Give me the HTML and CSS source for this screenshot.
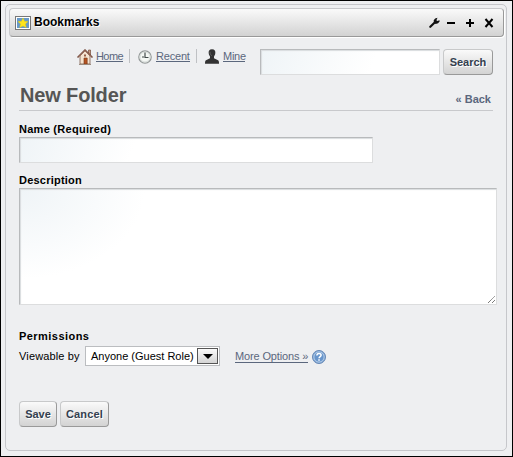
FILE: index.html
```html
<!DOCTYPE html>
<html lang="en">
<head>
<meta charset="utf-8">
<title>Bookmarks</title>
<link rel="stylesheet" href="styles.css">
</head>
<body>
<main class="portlet">
  <header class="topper">
    <svg class="star-icon" width="16" height="14" viewBox="0 0 16 14"><rect x=".5" y=".5" width="15" height="13" fill="#fff" stroke="#777"/><rect x="2" y="2" width="12" height="10" fill="#6799c9"/><path d="M8 2l1.500 3.200 3.500.4-2.600 2.400.9 3.600L8 9.900l-3.300 1.700.9-3.600L3 5.600l3.500-.4z" fill="#ffe51b" stroke="#e6c900" stroke-width=".4"/></svg>
    <span class="topper-title">Bookmarks</span>
    <svg class="controls" width="66" height="12" viewBox="0 0 66 12"><path d="M1.300 9.800L6 5.300" stroke="#111" stroke-width="2.200" stroke-linecap="round"/><path d="M8.500.8L6.200 1.500 4.700 3.300l.2 2.500 1.800 1.100 2.400-.7 1.600-2-.3-.9-2 .8-1-.8z" fill="#111"/><path d="M18 6h8M37 6h8M41 2v8" stroke="#000" stroke-width="2"/><path d="M56.500 2l7 8M63.500 2l-7 8" stroke="#000" stroke-width="2"/></svg>
  </header>
  <div class="toolbar">
    <nav class="nav">
      <svg class="home-icon" width="16" height="16" viewBox="0 0 16 16"><path d="M11.500 1h2v5h-2z" fill="#c99980" stroke="#754d3b" stroke-width=".7"/><path d="M3 7l5-5 5 5v8H3z" fill="#f5e4d1" stroke="#7c5c4c" stroke-width=".8"/><path d="M.5 8.500L8 1l7.500 7.500" fill="none" stroke="#71483a" stroke-width="1.500"/><path d="M1.500 8L8 1.600 14.500 8" fill="none" stroke="#c79884" stroke-width=".7"/><path d="M7 9h3.200v6H7z" fill="#b65321" stroke="#733719" stroke-width=".6"/><path d="M7 5.500h2v2H7z" fill="#966149"/><path d="M2 15.500h12" stroke="#9b8c80"/></svg>
      <a class="link home" href="#">Home</a>
      <span class="divider"></span>
      <svg class="clock-icon" width="14" height="14" viewBox="0 0 14 14"><circle cx="7" cy="7" r="6.200" fill="#f5f8f5" stroke="#929797" stroke-width="1.200"/><circle cx="7" cy="7" r="5" fill="none" stroke="#d7dcda"/><path d="M7 2.500V7.500H10.500M4 7h2" fill="none" stroke="#434b4b" stroke-width="1.200"/></svg>
      <a class="link recent" href="#">Recent</a>
      <span class="divider"></span>
      <svg class="user-icon" width="14" height="15" viewBox="0 0 14 15"><path d="M7 .2c2.700 0 3.700 1.800 3.300 4.100-.2 1.700-1 2.600-1.300 3.300v1.600l4 2c1 .6 1 2.200 1 3.600H0c0-1.400 0-3 1-3.600l4-2V7.600C4.700 6.900 3.900 6 3.700 4.300 3.300 2 4.300.2 7 .2z" fill="#333"/><path d="M5 2.700c0 2 .3 3.300 2 4" fill="none" stroke="#666" stroke-width=".8"/></svg>
      <a class="link mine" href="#">Mine</a>
    </nav>
    <div class="field search-field"></div>
    <div class="button search-button"><span>Search</span></div>
  </div>
  <div class="heading">
    <h1>New Folder</h1>
    <a class="back" href="#">« Back</a>
  </div>
  <section class="form">
    <div class="label name-label"><span>Name (Required)</span></div>
    <div class="field name-field"></div>
    <div class="label description-label"><span>Description</span></div>
    <div class="field description-field"><svg class="grip" width="9" height="9" viewBox="0 0 9 9"><path d="M1 8L8 1M5 8l3-3" stroke="#555" stroke-width="1" stroke-dasharray="1.100 .5"/></svg></div>
    <div class="label permissions-label"><span>Permissions</span></div>
    <div class="permissions">
      <span class="viewable">Viewable by</span>
      <div class="select"><span class="select-text">Anyone (Guest Role)</span><span class="arrow"><svg width="10" height="5" viewBox="0 0 10 5"><path d="M0 0h10L5 5z"/></svg></span></div>
      <a class="link more" href="#">More Options »</a>
      <svg class="help-icon" width="14" height="14" viewBox="0 0 14 14"><circle cx="7" cy="7" r="6.500" fill="#7da3d1" stroke="#6688b6"/><circle cx="7" cy="7" r="5.100" fill="#6795cc" stroke="#b9d0ea" stroke-width=".9"/><path d="M4.900 5.400c0-2.800 4.300-2.500 4.200-.2 0 1.400-2 1.400-2 3M7 9.200v1.600" fill="none" stroke="#fff" stroke-width="1.500"/></svg>
    </div>
    <div class="actions"><div class="button save"><span>Save</span></div><div class="button cancel"><span>Cancel</span></div></div>
  </section>
</main>
</body>
</html>
```

FILE: styles.css
```css
* { box-sizing: border-box; }
body {
  margin: 0;
  height: 457px;
  padding: 3px 4px 5px;
  border: 1px solid #000;
  background: #eeeff1;
  font: 11px/14px "Liberation Sans", Arial, sans-serif;
  color: #000;
  overflow: hidden;
}
svg { display: block; flex: none; }
span, a { white-space: nowrap; }
.portlet {
  width: 502px;
  height: 447px;
  border: 1px solid #c6c7cb;
  border-radius: 5px;
  padding: 3px;
}
.topper {
  width: 495px;
  height: 29px;
  display: flex;
  align-items: flex-start;
  border: 1px solid #c8c9cc;
  border-right-color: #999;
  border-bottom-color: #999;
  border-radius: 4px;
  background: linear-gradient(#fafafa, #d2d2d2);
  box-shadow: 1px 1px #fff;
}
.star-icon { margin: 7px 0 0 5px; }
.topper-title { margin: 6px 0 0 3px; font-size: 12px; font-weight: bold; text-shadow: 1px 1px #fff; }
.controls { margin: 8px 8px 0 auto; }
.toolbar { display: flex; height: 39px; padding: 12px 0 0 68px; align-items: flex-start; }
.nav { display: flex; width: 183px; align-items: flex-start; }
.link { color: #5b677d; text-decoration: none; border-bottom: 1px solid #5b677d; height: 13px; line-height: 13px; }
.nav .link { margin-top: 1px; line-height: 12px; height: 12px; }
.home { width: 27px; margin-left: 3px; letter-spacing: -.58px; }
.recent { width: 34px; margin-left: 4px; letter-spacing: -.2px; }
.mine { width: 22px; margin-left: 4px; letter-spacing: -.25px; }
.divider { width: 1px; height: 14px; margin: 0 8px 0 6px; background: #bfc1c4; }
.home + .divider { margin-right: 8px; }
.clock-icon { margin-top: 1px; }
.field {
  border: 1px solid #dcddde;
  border-top-color: #b8babc;
  border-left-color: #b8babc;
  background: linear-gradient(110deg, #eff4f7 0, #fff 110px);
  box-shadow: inset 1px 1px 1px #d9dcde;
}
.search-field { width: 180px; height: 26px; }
.button {
  height: 26px;
  display: flex;
  align-items: center;
  justify-content: center;
  border: 1px solid #c8c9ca;
  border-right-color: #999;
  border-bottom-color: #999;
  border-radius: 4px;
  background: linear-gradient(#fafafa, #d3d3d3);
  color: #34404f;
  font-weight: bold;
  text-shadow: 1px 1px #fff;
}
.search-button { width: 50px; margin-left: 3px; }
.heading { display: flex; width: 474px; height: 35px; margin-left: 10px; border-bottom: 1px solid #c8c9cc; }
h1 { margin: 6px 0 0 1px; font-size: 20px; line-height: 26px; color: #555; font-weight: bold; letter-spacing: -.15px; }
.back { margin: 16px 2px 0 auto; color: #5b677d; font-weight: bold; text-decoration: none; }
.form { margin-left: 10px; }
.label { font-weight: bold; letter-spacing: .27px; }
.name-label { height: 26px; padding-top: 11px; }
.name-field { width: 354px; height: 26px; }
.description-label { height: 25px; padding-top: 10px; }
.description-field { display: flex; align-items: flex-end; justify-content: flex-end; width: 478px; height: 117px; background: radial-gradient(ellipse 125px 90px at 0 0, #eff4f7, #fff); }
.description-label, .permissions-label { letter-spacing: .22px; }
.permissions-label { letter-spacing: .45px; }
.permissions-label { height: 41px; padding-top: 24px; }
.permissions { display: flex; align-items: flex-start; height: 20px; }
.viewable { width: 66px; margin-top: 3px; letter-spacing: .15px; }
.select { display: flex; width: 135px; height: 20px; border: 1px solid #bbbdc0; background: #fff; }
.select-text { margin: 2px 0 0 5px; width: 106px; }
.arrow { display: flex; align-items: center; justify-content: center; width: 21px; height: 16px; margin-top: 1px; border: 1px solid #555; background: linear-gradient(#fafafa, #d4d4d4); }
.more { width: 73px; margin: 4px 4px 0 15px; letter-spacing: -.14px; }
.help-icon { margin-top: 4px; }
.actions { display: flex; gap: 3px; margin-top: 35px; }
.save { width: 38px; }
.cancel { width: 49px; letter-spacing: .15px; }
```
